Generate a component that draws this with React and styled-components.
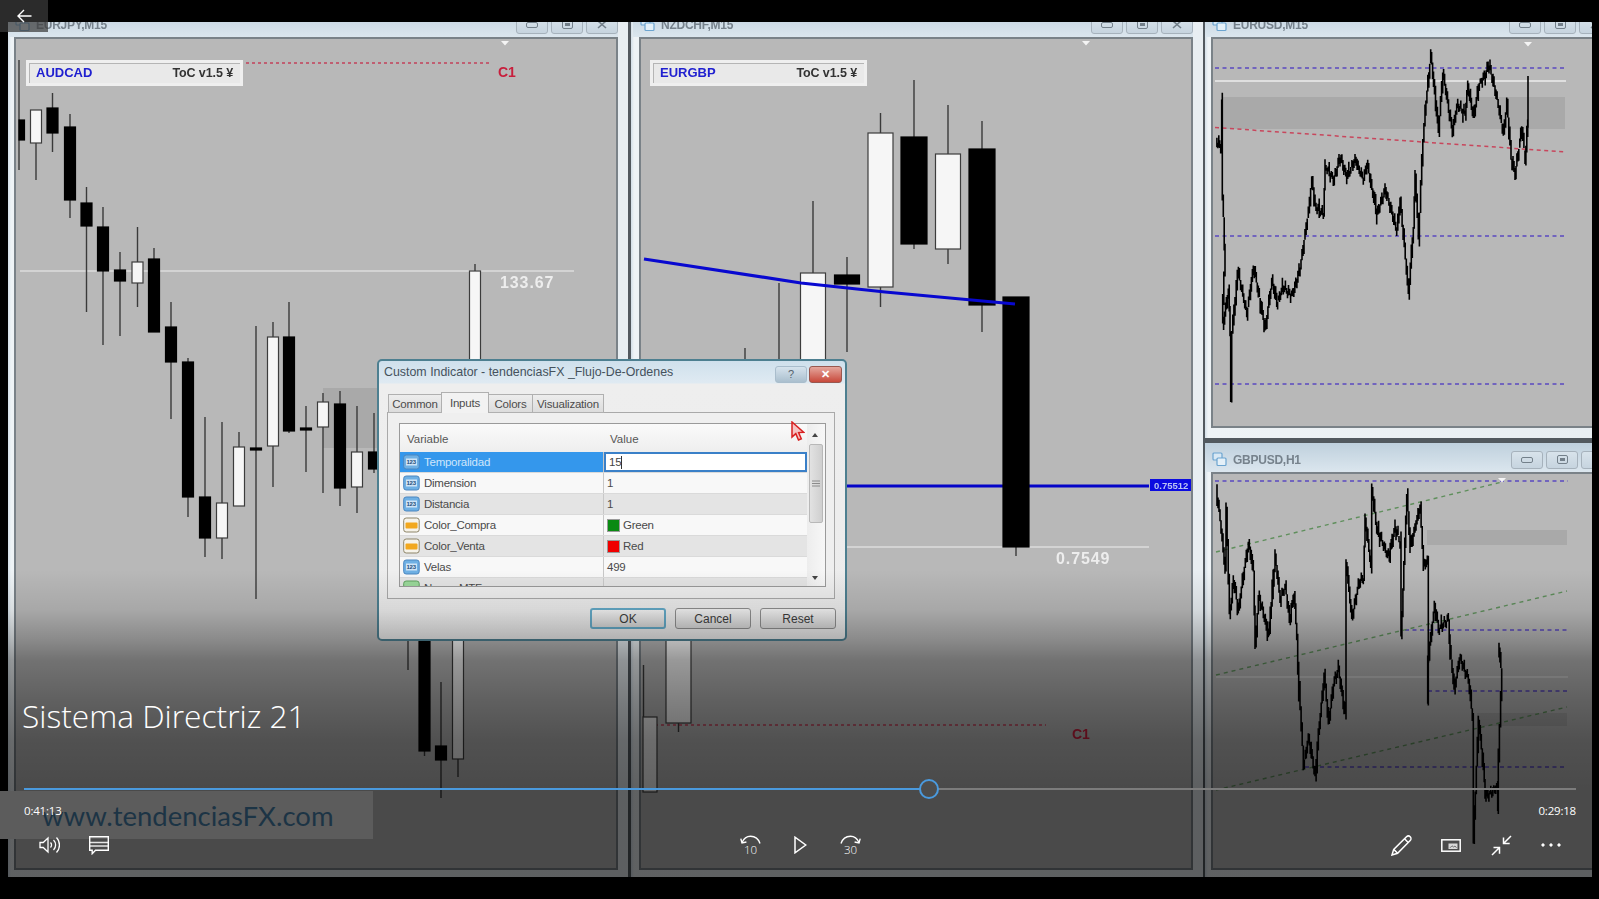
import React from 'react';
import styled, { createGlobalStyle } from 'styled-components';

const Global = createGlobalStyle`
  html, body { margin: 0; padding: 0; background: #000; overflow: hidden; }
  * { box-sizing: border-box; }
`;

/* ---------- page and video frame ---------- */
const Page = styled.div`
  position: relative;
  width: 1599px;
  height: 899px;
  padding: 22px 7px 22px 8px;
  background: #000;
  overflow: hidden;
  font-family: "Liberation Sans", Arial, sans-serif;
`;
const Frame = styled.div`
  position: relative;
  display: flex;
  width: 1584px;
  height: 855px;
  background: #52595f;
  overflow: hidden;
  filter: blur(0.45px);
`;
const RightColumn = styled.div`
  display: flex;
  flex-direction: column;
  gap: 5px;
  width: 387px;
  margin-left: 2px;
`;
const Window = styled.section`
  display: flex;
  flex-direction: column;
  flex: ${p => (p.$grow ? 1 : 'none')};
  width: ${p => p.$w || '100%'};
  height: ${p => p.$h || '100%'};
  margin-left: ${p => p.$ml || 0};
  padding: 0 ${p => p.$pr || '0'} ${p => p.$pb || '7px'} ${p => p.$pl || '6px'};
  background: linear-gradient(90deg, #d3dfe8, #eef3f6 3px, #e8eef2);
  overflow: hidden;
`;
const TitleBar = styled.header`
  display: flex;
  align-items: center;
  flex: none;
  height: 29px;
  padding: 4px 0 0 1px;
  margin: ${p => (p.$clipped ? '-14px 0 0' : '0')};
  margin-left: -6px;
  padding-left: 7px;
  background: linear-gradient(#bfd0dd, #dbe6ee);
`;
const TitleText = styled.span`
  flex: 1;
  margin-left: 6px;
  font-size: 12px;
  font-weight: 700;
  color: #76828c;
  letter-spacing: -0.25px;
`;
const WinButtons = styled.div`
  display: flex;
  gap: 3px;
  margin-right: ${p => p.$mr || '0'};
`;
const WinButton = styled.span`
  display: flex;
  align-items: center;
  justify-content: center;
  width: 32px;
  height: 18px;
  border: 1px solid #a6b2bc;
  border-radius: 3px;
  background: linear-gradient(#d8e3eb, #c6d4df);
`;
const Chart = styled.div`
  position: relative;
  flex: 1;
  min-height: 0;
  margin-right: ${p => p.$mr || 0};
  border: 2px solid #7a8288;
  background: #b8b8b8;
  svg { display: block; width: 100%; height: 100%; }
`;
const SymbolPanel = styled.div`
  position: absolute;
  left: ${p => p.$left};
  top: 21px;
  display: flex;
  align-items: center;
  justify-content: space-between;
  width: 217px;
  height: 26px;
  padding: 0 7px 1px 7px;
  background: #e9e9e9;
  border: 3px solid #efefef;
  box-shadow: inset 1px 1px 0 #b5b5b5;
  font-size: 13px;
  font-weight: 700;
`;
const SymbolName = styled.span`
  color: #2020d0;
`;
const SymbolTool = styled.span`
  color: #333;
  font-size: 12.5px;
  letter-spacing: -0.1px;
`;
const ChartLabel = styled.text`
  font-family: "Liberation Sans", Arial, sans-serif;
  font-weight: 700;
  font-size: ${p => p.$size || '15px'};
  letter-spacing: ${p => p.$track || '0'};
`;

/* ---------- indicator dialog ---------- */
const Dialog = styled.div`
  position: absolute;
  left: 377px;
  top: 359px;
  width: 470px;
  height: 282px;
  padding: 0 10px 0 8px;
  border: 2px solid #4d7f90;
  border-radius: 5px;
  background: linear-gradient(#cfe0ec 0, #dfeaf2 22px, #eeeeee 23px, #ececec 100%);
  font-family: "Liberation Sans", Arial, sans-serif;
  color: #3d3d3d;
`;
const DialogHead = styled.div`
  display: flex;
  align-items: center;
  justify-content: space-between;
  height: 22px;
  margin-right: -7px;
  margin-left: -3px;
`;
const DialogTitle = styled.span`
  font-size: 12.4px;
  color: #45525d;
`;
const DialogControls = styled.div`
  display: flex;
  gap: 2px;
  margin-top: 4px;
`;
const HelpButton = styled.span`
  display: flex;
  align-items: center;
  justify-content: center;
  width: 32px;
  height: 17px;
  border-radius: 3px;
  border: 1px solid #a9bdcc;
  background: linear-gradient(#d6e3ed, #aabfce);
  font-size: 11px;
  color: #55626c;
`;
const CloseButton = styled(HelpButton)`
  width: 33px;
  border-color: #99584f;
  background: linear-gradient(#e5a79d, #c8493b);
  color: #fff;
  font-weight: 700;
`;
const Tabs = styled.div`
  display: flex;
  align-items: flex-end;
  height: 21px;
  margin-top: 9px;
  padding-left: 1px;
`;
const Tab = styled.span`
  display: flex;
  align-items: center;
  justify-content: center;
  width: ${p => p.$w};
  height: ${p => (p.$active ? '21px' : '19px')};
  border: 1px solid #b0b0b0;
  border-bottom: ${p => (p.$active ? 'none' : '1px solid #b0b0b0')};
  margin-right: -1px;
  background: ${p => (p.$active ? '#f2f2f2' : 'linear-gradient(#ededed, #dcdcdc)')};
  font-size: 11.5px;
  letter-spacing: -0.2px;
  color: #4c4c4c;
  position: relative;
  z-index: ${p => (p.$active ? 1 : 0)};
`;
const TabPanel = styled.div`
  height: 187px;
  margin-top: -1px;
  padding: 10px 0 0 11px;
  border: 1px solid #a9a9a9;
  background: #efefef;
`;
const PropertyGrid = styled.div`
  display: flex;
  width: 427px;
  height: 164px;
  border: 1px solid #9a9a9a;
  overflow: hidden;
`;
const GridBody = styled.div`
  flex: 1;
  min-width: 0;
`;
const GridHeader = styled.div`
  display: grid;
  grid-template-columns: 204px 1fr;
  height: 28px;
  align-items: center;
  background: linear-gradient(#fafafa, #eeeeee);
  font-size: 11.5px;
  color: #565656;
`;
const HeaderCell = styled.span`
  padding-left: ${p => p.$pl || '7px'};
  padding-top: 1px;
`;
const Row = styled.div`
  display: grid;
  grid-template-columns: 204px 1fr;
  height: 21px;
  background: ${p => (p.$alt ? '#e4e4e4' : '#f8f8f8')};
  border-bottom: 1px solid #dadada;
  font-size: 11.5px;
  letter-spacing: -0.25px;
  color: #4a4a4a;
`;
const NameCell = styled.div`
  display: flex;
  align-items: center;
  gap: 4px;
  padding-left: 3px;
  background: ${p => (p.$selected ? '#3497ec' : 'transparent')};
  color: ${p => (p.$selected ? '#cfe6fb' : 'inherit')};
  border-right: 1px solid #c8c8c8;
`;
const ValueCell = styled.div`
  display: flex;
  align-items: center;
  gap: 3px;
  padding-left: 3px;
`;
const EditCell = styled(ValueCell)`
  background: #fff;
  border: 2px solid #3a80c8;
  color: #444;
`;
const Caret = styled.span`
  width: 1px;
  height: 13px;
  margin-left: -3px;
  background: #333;
`;
const Swatch = styled.span`
  width: 13px;
  height: 13px;
  background: ${p => p.$color};
  border: 1px solid #9a9a9a;
`;
const ScrollBar = styled.div`
  position: relative;
  flex: none;
  width: 18px;
  background: linear-gradient(90deg, #ededed, #f7f7f7);
`;
const ScrollThumb = styled.div`
  position: absolute;
  left: 2px;
  top: 20px;
  width: 14px;
  height: 79px;
  display: flex;
  align-items: center;
  justify-content: center;
  border: 1px solid #b8b8b8;
  border-radius: 2px;
  background: linear-gradient(90deg, #e2e2e2, #cfcfcf);
`;
const Arrow = styled.span`
  position: absolute;
  left: 5px;
  ${p => (p.$up ? 'top: 9px;' : 'bottom: 6px;')}
  border-left: 3px solid transparent;
  border-right: 3px solid transparent;
  ${p => (p.$up ? 'border-bottom: 4px solid #444;' : 'border-top: 4px solid #444;')}
`;
const DialogButtons = styled.div`
  display: flex;
  justify-content: flex-end;
  gap: 9px;
  margin: 9px -1px 0 0;
`;
const DialogButton = styled.span`
  display: flex;
  align-items: center;
  justify-content: center;
  width: 76px;
  height: 21px;
  border: ${p => (p.$primary ? '2px solid #64aac8' : '1px solid #8f8f8f')};
  border-radius: 3px;
  background: linear-gradient(#f4f4f4, #d9d9d9);
  font-size: 12px;
  color: #3d3d3d;
`;
const PointerMark = styled.svg`
  position: absolute;
  left: 412px;
  top: 60px;
`;

/* ---------- player chrome ---------- */
const Dim = styled.div`
  position: absolute;
  inset: 0;
  pointer-events: none;
  background: linear-gradient(
    to bottom,
    rgba(0, 0, 0, 0) 570px,
    rgba(0, 0, 0, 0.09) 610px,
    rgba(0, 0, 0, 0.25) 640px,
    rgba(0, 0, 0, 0.38) 660px,
    rgba(0, 0, 0, 0.48) 700px,
    rgba(0, 0, 0, 0.56) 740px,
    rgba(0, 0, 0, 0.6) 790px,
    rgba(0, 0, 0, 0.6) 877px,
    rgba(0, 0, 0, 0) 877px
  );
`;
const Watermark = styled.div`
  position: absolute;
  left: 0;
  top: 791px;
  display: flex;
  align-items: center;
  width: 373px;
  height: 48px;
  padding: 0 0 0 42px;
  background: #5c5c5c;
  color: #1c3445;
  font-family: Lato, "Open Sans", sans-serif;
  font-size: 27.5px;
  white-space: nowrap;
`;
const BackButton = styled.div`
  position: absolute;
  left: 0;
  top: 0;
  display: flex;
  align-items: center;
  justify-content: center;
  width: 48px;
  height: 32px;
  background: rgba(60, 60, 60, 0.72);
`;
const Panel = styled.div`
  position: absolute;
  left: 0;
  right: 0;
  top: 694px;
  display: flex;
  flex-direction: column;
  color: #fff;
  font-family: "Open Sans", "Noto Sans", sans-serif;
`;
const VideoTitle = styled.h1`
  height: 44px;
  margin: 0 0 41px;
  padding-left: 22px;
  font-size: 31.7px;
  font-weight: 300;
  line-height: 44px;
  color: #fff;
`;
const Timeline = styled.div`
  position: relative;
  height: 20px;
  margin: 0 23px 0 24px;
`;
const TrackBase = styled.div`
  position: absolute;
  left: 0;
  right: 0;
  top: 9px;
  height: 2px;
  background: #7c7c7c;
`;
const TrackFill = styled.div`
  position: absolute;
  left: 0;
  top: 9px;
  height: 2px;
  background: #4a9ade;
`;
const Thumb = styled.div`
  position: absolute;
  top: 0;
  width: 20px;
  height: 20px;
  margin-left: -10px;
  border: 2.5px solid #4a9ade;
  border-radius: 50%;
  background: #4d4d4d;
`;
const Times = styled.div`
  display: flex;
  justify-content: space-between;
  height: 16px;
  margin: 4px 23px 0 24px;
  font-size: 11.5px;
  line-height: 16px;
  letter-spacing: -0.2px;
`;
const Controls = styled.div`
  display: flex;
  justify-content: space-between;
  height: 40px;
  margin: 6px 23px 0 24px;
`;
const ControlGroup = styled.div`
  display: flex;
  width: 200px;
  justify-content: ${p => p.$align || 'flex-start'};
`;
const ControlButton = styled.span`
  display: flex;
  align-items: center;
  justify-content: center;
  width: 50px;
  height: 40px;
`;
const SmallNum = styled.text`
  font-family: "Open Sans", sans-serif;
  font-size: 11.5px;
  font-weight: 300;
  fill: #fff;
`;
const TinyNum = styled.text`
  font-family: "Liberation Sans", sans-serif;
  font-size: 6px;
  font-weight: 700;
  fill: #1d4f7a;
`;

/* ---------- chart data (page coordinates) ---------- */
const W = '#f6f6f6';
const B = '#000';
const eurjpy = [
  [19, 60, 61, 60, 170, B, 1], [21.75, 120, 140, 120, 140, B, 5.5], [36, 110, 143, 110, 180, W, 11], [52.5, 108, 133, 93, 152, B, 11],
  [70, 127, 200, 114, 218, B, 11], [86.5, 203, 226, 187, 312, B, 11], [103, 227, 271, 207, 345, B, 11],
  [120, 270, 281, 252, 336, B, 11], [137.5, 262, 283, 227, 307, W, 11], [154, 259, 332, 248, 332, B, 11],
  [171, 327, 362, 302, 419, B, 11], [188, 362, 497, 358, 517, B, 11], [205, 497, 538, 417, 557, B, 11],
  [222, 503, 538, 422, 559, W, 11], [239, 447, 506, 432, 506, W, 11], [256, 448, 450, 326, 599, B, 11],
  [273, 337, 446, 322, 487, W, 11], [289, 337, 431, 302, 433, B, 11], [306, 428, 430, 406, 472, B, 11],
  [323, 402, 427, 393, 493, W, 11], [340, 404, 488, 391, 506, B, 11], [357, 452, 487, 406, 513, W, 11],
  [374, 452, 469, 413, 473, B, 11], [475, 271, 520, 264, 520, W, 11],
  [408, 600, 601, 600, 670, B, 1], [424.5, 560, 751, 520, 756, B, 11], [441, 746, 760, 682, 798, B, 11],
  [458, 560, 759, 520, 777, W, 11]
];
const nzdchf = [
  [745, 360, 361, 348, 420, B, 1], [779, 360, 361, 283, 420, B, 1], [813, 273, 400, 201, 400, W, 25],
  [847, 275, 284, 257, 352, B, 25], [880.5, 133, 287, 113, 307, W, 25], [914, 137, 244, 80, 249, B, 26],
  [948, 154, 249, 105, 264, W, 25], [982, 149, 305, 121, 332, B, 26], [1016, 297, 547, 297, 556, B, 26],
  [643.5, 665, 666, 665, 717, B, 1], [650, 717, 792, 717, 792, W, 14], [678.5, 560, 723, 560, 732, W, 25]
];
const zoom6 = (pts) => pts.map(([x, y]) => [1200 + x / 3, y / 3]);
const eurusdPts = zoom6([
  [48, 425], [62, 440], [65, 300], [67, 600], [70, 650], [75, 820], [68, 975], [85, 870], [90, 1000], [92, 1195],
  [95, 1000], [105, 900], [112, 810], [125, 870], [140, 940], [160, 800], [175, 880], [195, 990], [215, 840],
  [230, 910], [250, 860], [275, 890], [300, 800], [315, 700], [325, 630], [335, 540], [345, 620], [370, 640],
  [375, 500], [400, 540], [420, 470], [440, 530], [465, 480], [490, 540], [500, 490], [530, 640], [555, 570],
  [590, 690], [600, 600], [625, 880], [640, 680], [645, 520], [655, 720], [665, 470], [675, 330], [692, 165],
  [715, 390], [728, 215], [757, 400], [770, 315], [795, 340], [803, 255], [820, 350], [835, 260], [850, 230],
  [867, 195], [885, 270], [910, 400], [920, 310], [933, 480], [945, 520], [965, 385], [975, 480], [983, 375], [984, 235]
]);
const z7 = (pts) => pts.map(([x, y]) => [1200 + x / 3, 440 + y / 3]);
const z5 = (pts) => pts.map(([x, y]) => [1200 + x / 3, 640 + y / 3]);
const gbpusdPts = [
  ...z7([[48, 145], [60, 240], [75, 390], [78, 205], [88, 525], [100, 420], [115, 510], [130, 400], [145, 310], [160, 390], [165, 620], [175, 470], [190, 520], [205, 590], [225, 350], [240, 480], [255, 440], [268, 540], [282, 460], [290, 590], [296, 780]]),
  ...z5([[296, 130], [300, 200], [310, 380], [325, 290], [345, 410], [355, 280], [372, 105], [385, 250], [400, 130], [415, 90], [435, 225], [438, 0]]),
  ...z7([[438, 370], [455, 535], [475, 430], [490, 410], [495, 235], [515, 400], [515, 150], [530, 270], [565, 350], [585, 260], [603, 320], [603, 590], [620, 165], [630, 320], [660, 200], [670, 380], [682, 360]]),
  ...z5([[685, 0], [685, 190], [683, 60]]),
  ...z7([[703, 495], [715, 570], [745, 535], [750, 650]]),
  ...z5([[750, 30], [762, 150], [778, 50], [805, 120], [820, 260], [820, 600], [835, 240], [850, 380], [855, 470], [890, 440], [893, 510], [895, 350], [905, 85], [897, 10]])
];

function jagged(points, seed, amp) {
  let s = seed;
  const rnd = () => { s = (s * 16807) % 2147483647; return s / 2147483647; };
  let d = '';
  for (let i = 1; i < points.length; i++) {
    const [x0, y0] = points[i - 1];
    const [x1, y1] = points[i];
    const n = Math.max(1, Math.round(Math.abs(x1 - x0)));
    for (let k = 0; k < n; k++) {
      const t0 = k / n;
      const t1 = (k + 1) / n;
      const x = x0 + (x1 - x0) * t1;
      const wobble = Math.sin(x * 1.9) * amp * 0.7;
      const a = y0 + (y1 - y0) * t0 + wobble;
      const b = y0 + (y1 - y0) * t1 + wobble;
      const spike = rnd() < 0.14 ? amp * 2.2 : amp;
      const up = Math.min(a, b) - rnd() * spike - 1;
      const dn = Math.max(a, b) + rnd() * spike + 1;
      d += `M${x.toFixed(1)} ${up.toFixed(1)}V${dn.toFixed(1)}`;
    }
  }
  return d;
}

const Candle = ({ c }) => {
  const [x, top, bot, hi, lo, fill, w] = c;
  return (
    <g>
      <line x1={x} x2={x} y1={hi} y2={lo} stroke="#3a3a3a" strokeWidth="1.4" />
      {w > 1 && (
        <rect x={x - w / 2} y={top} width={w} height={bot - top} fill={fill} stroke={fill === B ? '#000' : '#3c3c3c'} strokeWidth="1.2" />
      )}
    </g>
  );
};

const Marker = ({ x, y }) => <path d={`M${x - 4} ${y - 2}h8l-4 4.5z`} fill="#f4f4f4" />;

const HLine = ({ x1, x2, y, color = '#dcdcdc', dash, w = 1.6 }) => (
  <line x1={x1} x2={x2} y1={y} y2={y} stroke={color} strokeWidth={w} strokeDasharray={dash} />
);

const ChartView = ({ view, children }) => (
  <svg viewBox={view} preserveAspectRatio="none" aria-hidden="true">{children}</svg>
);

const EurJpyChart = () => (
  <ChartView view="16 39 600 829">
    <rect x="323" y="388" width="60" height="60" fill="#a9a9a9" />
    <HLine x1={20} x2={574} y={271} />
    <HLine x1={246} x2={491} y={63} color="#c2405a" dash="3 3" w={1.3} />
    {eurjpy.map((c, i) => <Candle key={i} c={c} />)}
    <Marker x={505} y={43} />
    <ChartLabel x="498" y="77" fill="#c81e3c" $size="14px">C1</ChartLabel>
    <ChartLabel x="500" y="288" fill="#ededed" $size="16px" $track="0.9px">133.67</ChartLabel>
  </ChartView>
);

const NzdChfChart = () => (
  <ChartView view="641 39 550 829">
    <HLine x1={800} x2={1149} y={547} />
    <HLine x1={800} x2={1149} y={486} color="#0404c8" w={3} />
    <HLine x1={643} x2={1046} y={725} color="#c2405a" dash="3 3" w={1.3} />
    {nzdchf.map((c, i) => <Candle key={i} c={c} />)}
    <path d="M644 259L801 283L885 292L1015 304" fill="none" stroke="#0808d0" strokeWidth="3.2" />
    <rect x="1150" y="479" width="43" height="12" fill="#0b0be0" />
    <ChartLabel x="1154" y="489" fill="#b9c4f4" $size="9.5px">0.75512</ChartLabel>
    <Marker x={1086} y={43} />
    <ChartLabel x="1056" y="564" fill="#ededed" $size="16px" $track="0.9px">0.7549</ChartLabel>
    <ChartLabel x="1072" y="739" fill="#c81e3c" $size="14px">C1</ChartLabel>
  </ChartView>
);

const EurUsdChart = () => (
  <ChartView view="1213 39 381 387">
    <rect x="1223" y="97" width="342" height="32" fill="#a9a9a9" />
    <HLine x1={1215} x2={1566} y={81} color="#ececec" />
    {[68, 236, 384].map(y => <HLine key={y} x1={1215} x2={1566} y={y} color="#5a48c0" dash="4 3.5" w={1.5} />)}
    <line x1="1215" y1="127.5" x2="1566" y2="152" stroke="#c8465c" strokeWidth="1.5" strokeDasharray="4 3.5" />
    <path d={jagged(eurusdPts, 1234, 4)} stroke="#000" strokeWidth="1.6" fill="none" />
    <Marker x={1528} y={44} />
  </ChartView>
);

const GbpUsdChart = () => (
  <ChartView view="1213 474 381 394">
    <rect x="1427" y="530" width="140" height="15" fill="#a9a9a9" />
    <rect x="1477" y="713" width="90" height="13" fill="#a9a9a9" />
    <HLine x1={1216} x2={1568} y={677} color="#d4d4d4" />
    <HLine x1={1215} x2={1568} y={481} color="#5a48c0" dash="4 3.5" w={1.5} />
    <HLine x1={1405} x2={1568} y={630} color="#5a48c0" dash="4 3.5" w={1.5} />
    <HLine x1={1428} x2={1568} y={691} color="#5a48c0" dash="4 3.5" w={1.5} />
    <HLine x1={1305} x2={1565} y={767} color="#5a48c0" dash="4 3.5" w={1.5} />
    {[[552, 1502, 482], [675, 1567, 591], [790, 1567, 707]].map(([y1, x2, y2]) => (
      <line key={y1} x1="1216" y1={y1} x2={x2} y2={y2} stroke="#5f8f5c" strokeWidth="1.4" strokeDasharray="4 4" />
    ))}
    <path d={jagged(gbpusdPts, 4321, 4)} stroke="#000" strokeWidth="1.6" fill="none" />
    <Marker x={1502} y={480} />
  </ChartView>
);

const WindowIcon = () => (
  <svg width="15" height="15" viewBox="0 0 15 15" fill="none" stroke="#6ba4d0" strokeWidth="1.2">
    <rect x="1" y="1" width="9" height="7" rx="1" fill="#d8e8f4" />
    <rect x="5" y="6" width="9" height="7.5" rx="1" fill="#e4f0f8" />
  </svg>
);
const MinGlyph = () => <svg width="12" height="8" viewBox="0 0 12 8"><rect x="0.5" y="1.5" width="11" height="5" rx="1.5" fill="none" stroke="#73808a" /></svg>;
const MaxGlyph = () => <svg width="11" height="9" viewBox="0 0 11 9"><rect x="0.5" y="0.5" width="10" height="8" rx="1.5" fill="none" stroke="#73808a" /><rect x="3" y="3" width="5" height="3" fill="#73808a" /></svg>;
const CloseGlyph = () => <svg width="10" height="9" viewBox="0 0 10 9"><path d="M1 1l8 7M9 1L1 8" stroke="#73808a" strokeWidth="1.6" /></svg>;

const ChartWindowBar = ({ title, clipped, mr }) => (
  <TitleBar $clipped={clipped}>
    <WindowIcon />
    <TitleText>{title}</TitleText>
    <WinButtons $mr={mr}>
      <WinButton><MinGlyph /></WinButton>
      <WinButton><MaxGlyph /></WinButton>
      <WinButton><CloseGlyph /></WinButton>
    </WinButtons>
  </TitleBar>
);

/* ---------- dialog rows ---------- */
const NumIcon = () => (
  <svg width="17" height="16" viewBox="0 0 17 16">
    <rect x="0.7" y="1" width="15.5" height="14" rx="2.5" fill="#6eb0e4" stroke="#4a86c0" />
    <rect x="3" y="4.5" width="11" height="7" fill="#cfe4f6" />
    <TinyNum x="3.5" y="10.3">123</TinyNum>
  </svg>
);
const ColorIcon = () => (
  <svg width="17" height="16" viewBox="0 0 17 16">
    <rect x="0.7" y="1" width="15.5" height="14" rx="2.5" fill="#f6f3ea" stroke="#8d8468" />
    <rect x="2.5" y="5.5" width="12" height="6" rx="1" fill="#f2a81e" />
  </svg>
);
const BoolIcon = () => (
  <svg width="17" height="16" viewBox="0 0 17 16">
    <rect x="0.7" y="1" width="15.5" height="14" rx="2.5" fill="#9ad89a" stroke="#5fa05f" />
  </svg>
);

const rows = [
  { name: 'Temporalidad', value: '15', icon: NumIcon, selected: true },
  { name: 'Dimension', value: '1', icon: NumIcon },
  { name: 'Distancia', value: '1', icon: NumIcon, alt: true },
  { name: 'Color_Compra', value: 'Green', swatch: '#0a8a12', icon: ColorIcon },
  { name: 'Color_Venta', value: 'Red', swatch: '#f00000', icon: ColorIcon, alt: true },
  { name: 'Velas', value: '499', icon: NumIcon },
  { name: 'Nuevo MTF', value: '', icon: BoolIcon, alt: true }
];

const IndicatorDialog = () => (
  <Dialog>
    <DialogHead>
      <DialogTitle>Custom Indicator - tendenciasFX _Flujo-De-Ordenes</DialogTitle>
      <DialogControls>
        <HelpButton>?</HelpButton>
        <CloseButton>✕</CloseButton>
      </DialogControls>
    </DialogHead>
    <Tabs>
      <Tab $w="54px">Common</Tab>
      <Tab $w="48px" $active>Inputs</Tab>
      <Tab $w="45px">Colors</Tab>
      <Tab $w="72px">Visualization</Tab>
    </Tabs>
    <TabPanel>
      <PropertyGrid>
        <GridBody>
          <GridHeader>
            <HeaderCell>Variable</HeaderCell>
            <HeaderCell $pl="6px">Value</HeaderCell>
          </GridHeader>
          {rows.map(r => {
            const Icon = r.icon;
            return (
              <Row key={r.name} $alt={r.alt}>
                <NameCell $selected={r.selected}><Icon />{r.name}</NameCell>
                {r.selected ? (
                  <EditCell>{r.value}<Caret /></EditCell>
                ) : (
                  <ValueCell>{r.swatch && <Swatch $color={r.swatch} />}{r.value}</ValueCell>
                )}
              </Row>
            );
          })}
        </GridBody>
        <ScrollBar>
          <Arrow $up />
          <ScrollThumb>
            <svg width="8" height="7" viewBox="0 0 8 7"><path d="M0 1h8M0 3.5h8M0 6h8" stroke="#8a8a8a" /></svg>
          </ScrollThumb>
          <Arrow />
        </ScrollBar>
      </PropertyGrid>
    </TabPanel>
    <DialogButtons>
      <DialogButton $primary>OK</DialogButton>
      <DialogButton>Cancel</DialogButton>
      <DialogButton>Reset</DialogButton>
    </DialogButtons>
    <PointerMark width="14" height="21" viewBox="0 0 14 21">
      <path d="M1 1l0 15 3.8-3.4 2.7 6.4 2.8-1.2-2.7-6.2 5-.3z" fill="#f5c4c4" stroke="#d82020" strokeWidth="1.5" />
    </PointerMark>
  </Dialog>
);

/* ---------- player icons ---------- */
const Ico = styled.svg`
  display: block;
  fill: none;
  stroke: #fff;
`;
const VolumeIcon = () => (
  <Ico width="21" height="18" viewBox="0 0 21 18" strokeWidth="1.3">
    <path d="M1 6.5h3.2L9 2v14l-4.8-4.5H1z" />
    <path d="M11.5 6.5a3.5 3.5 0 0 1 0 5M14.5 4a7 7 0 0 1 0 10M17.5 1.5a11 11 0 0 1 0 15" />
  </Ico>
);
const ChatIcon = () => (
  <Ico width="20" height="19" viewBox="0 0 20 19" strokeWidth="1.4">
    <path d="M.7.7h18.6v13.6H6.5l-3.3 3.4v-3.4H.7z" />
    <path d="M1 6.5h18M1 10h18" strokeWidth="1.4" opacity="0.85" />
  </Ico>
);
const SkipBackIcon = () => (
  <Ico width="21" height="20" viewBox="0 0 21 20" strokeWidth="1.4">
    <path d="M20 8.5C18.5 3.8 14.8 1.2 10.5 1.2S3.6 3.8 2 7.5" />
    <path d="M.8 3.6 2 8l4.4-1" />
    <SmallNum x="4" y="19" stroke="none">10</SmallNum>
  </Ico>
);
const SkipForwardIcon = () => (
  <Ico width="21" height="20" viewBox="0 0 21 20" strokeWidth="1.4">
    <path d="M1 8.5C2.5 3.8 6.2 1.2 10.5 1.2S17.4 3.8 19 7.5" />
    <path d="M20.2 3.6 19 8l-4.4-1" />
    <SmallNum x="4" y="19" stroke="none">30</SmallNum>
  </Ico>
);
const PlayIcon = () => (
  <Ico width="13" height="18" viewBox="0 0 13 18" strokeWidth="1.5">
    <path d="M1 1.2v15.6L11.8 9z" />
  </Ico>
);
const PencilIcon = () => (
  <Ico width="21" height="21" viewBox="0 0 21 21" strokeWidth="1.5">
    <path d="M1 20l1.7-5.6L15.5 1.8c1-1 2.7-1 3.7 0s1 2.7 0 3.7L6.6 18.3z" />
    <path d="M2.7 14.4l3.9 3.9M13.5 3.8l3.7 3.7" />
  </Ico>
);
const PipIcon = () => (
  <Ico width="20" height="13" viewBox="0 0 20 13" strokeWidth="1.5">
    <rect x=".8" y=".8" width="18.4" height="11.4" />
    <rect x="7.5" y="4.5" width="9" height="5.5" fill="#d8d8d8" stroke="none" />
    <path d="M9 8.8l2-2 1.5 1.2 1.5-1 1.5 1.8" stroke="#555" strokeWidth="0.8" />
  </Ico>
);
const ShrinkIcon = () => (
  <Ico width="21" height="21" viewBox="0 0 21 21" strokeWidth="1.5">
    <path d="M20 1l-7.5 7.5M12.5 2.5v6h6.2M1 20l7.5-7.5M2.5 12.5h6v6.2" />
  </Ico>
);
const DotsIcon = () => (
  <Ico width="20" height="4" viewBox="0 0 20 4" stroke="none">
    <circle cx="2" cy="2" r="1.2" fill="#fff" />
    <circle cx="10" cy="2" r="1.2" fill="#fff" />
    <circle cx="18" cy="2" r="1.2" fill="#fff" />
  </Ico>
);
const BackIcon = () => (
  <Ico width="15" height="14" viewBox="0 0 15 14" strokeWidth="1.4">
    <path d="M14.5 7H1M7 1 1 7l6 6" />
  </Ico>
);

const progress = 0.583;

export default function App() {
  const pct = `${progress * 100}%`;
  return (
    <Page>
      <Global />
      <Frame>
        <Window $w="620px" $pr="10px">
          <ChartWindowBar title="EURJPY,M15" clipped />
          <Chart>
            <EurJpyChart />
            <SymbolPanel $left="10px"><SymbolName>AUDCAD</SymbolName><SymbolTool>ToC v1.5 ¥</SymbolTool></SymbolPanel>
          </Chart>
        </Window>
        <Window $w="572px" $ml="3px" $pl="8px" $pr="10px">
          <ChartWindowBar title="NZDCHF,M15" clipped />
          <Chart>
            <NzdChfChart />
            <SymbolPanel $left="9px"><SymbolName>EURGBP</SymbolName><SymbolTool>ToC v1.5 ¥</SymbolTool></SymbolPanel>
          </Chart>
        </Window>
        <RightColumn>
          <Window $h="416px" $pb="10px">
            <ChartWindowBar title="EURUSD,M15" clipped mr="-19px" />
            <Chart $mr="-4px"><EurUsdChart /></Chart>
          </Window>
          <Window $h="434px">
            <ChartWindowBar title="GBPUSD,H1" mr="-21px" />
            <Chart $mr="-4px"><GbpUsdChart /></Chart>
          </Window>
        </RightColumn>
      </Frame>
      <IndicatorDialog />
      <Dim />
      <Watermark>www.tendenciasFX.com</Watermark>
      <BackButton><BackIcon /></BackButton>
      <Panel>
        <VideoTitle>Sistema Directriz 21</VideoTitle>
        <Timeline>
          <TrackBase />
          <TrackFill style={{ width: pct }} />
          <Thumb style={{ left: pct }} />
        </Timeline>
        <Times><span>0:41:13</span><span>0:29:18</span></Times>
        <Controls>
          <ControlGroup>
            <ControlButton><VolumeIcon /></ControlButton>
            <ControlButton><ChatIcon /></ControlButton>
          </ControlGroup>
          <ControlGroup $align="center">
            <ControlButton><SkipBackIcon /></ControlButton>
            <ControlButton><PlayIcon /></ControlButton>
            <ControlButton><SkipForwardIcon /></ControlButton>
          </ControlGroup>
          <ControlGroup $align="flex-end">
            <ControlButton><PencilIcon /></ControlButton>
            <ControlButton><PipIcon /></ControlButton>
            <ControlButton><ShrinkIcon /></ControlButton>
            <ControlButton><DotsIcon /></ControlButton>
          </ControlGroup>
        </Controls>
      </Panel>
    </Page>
  );
}
